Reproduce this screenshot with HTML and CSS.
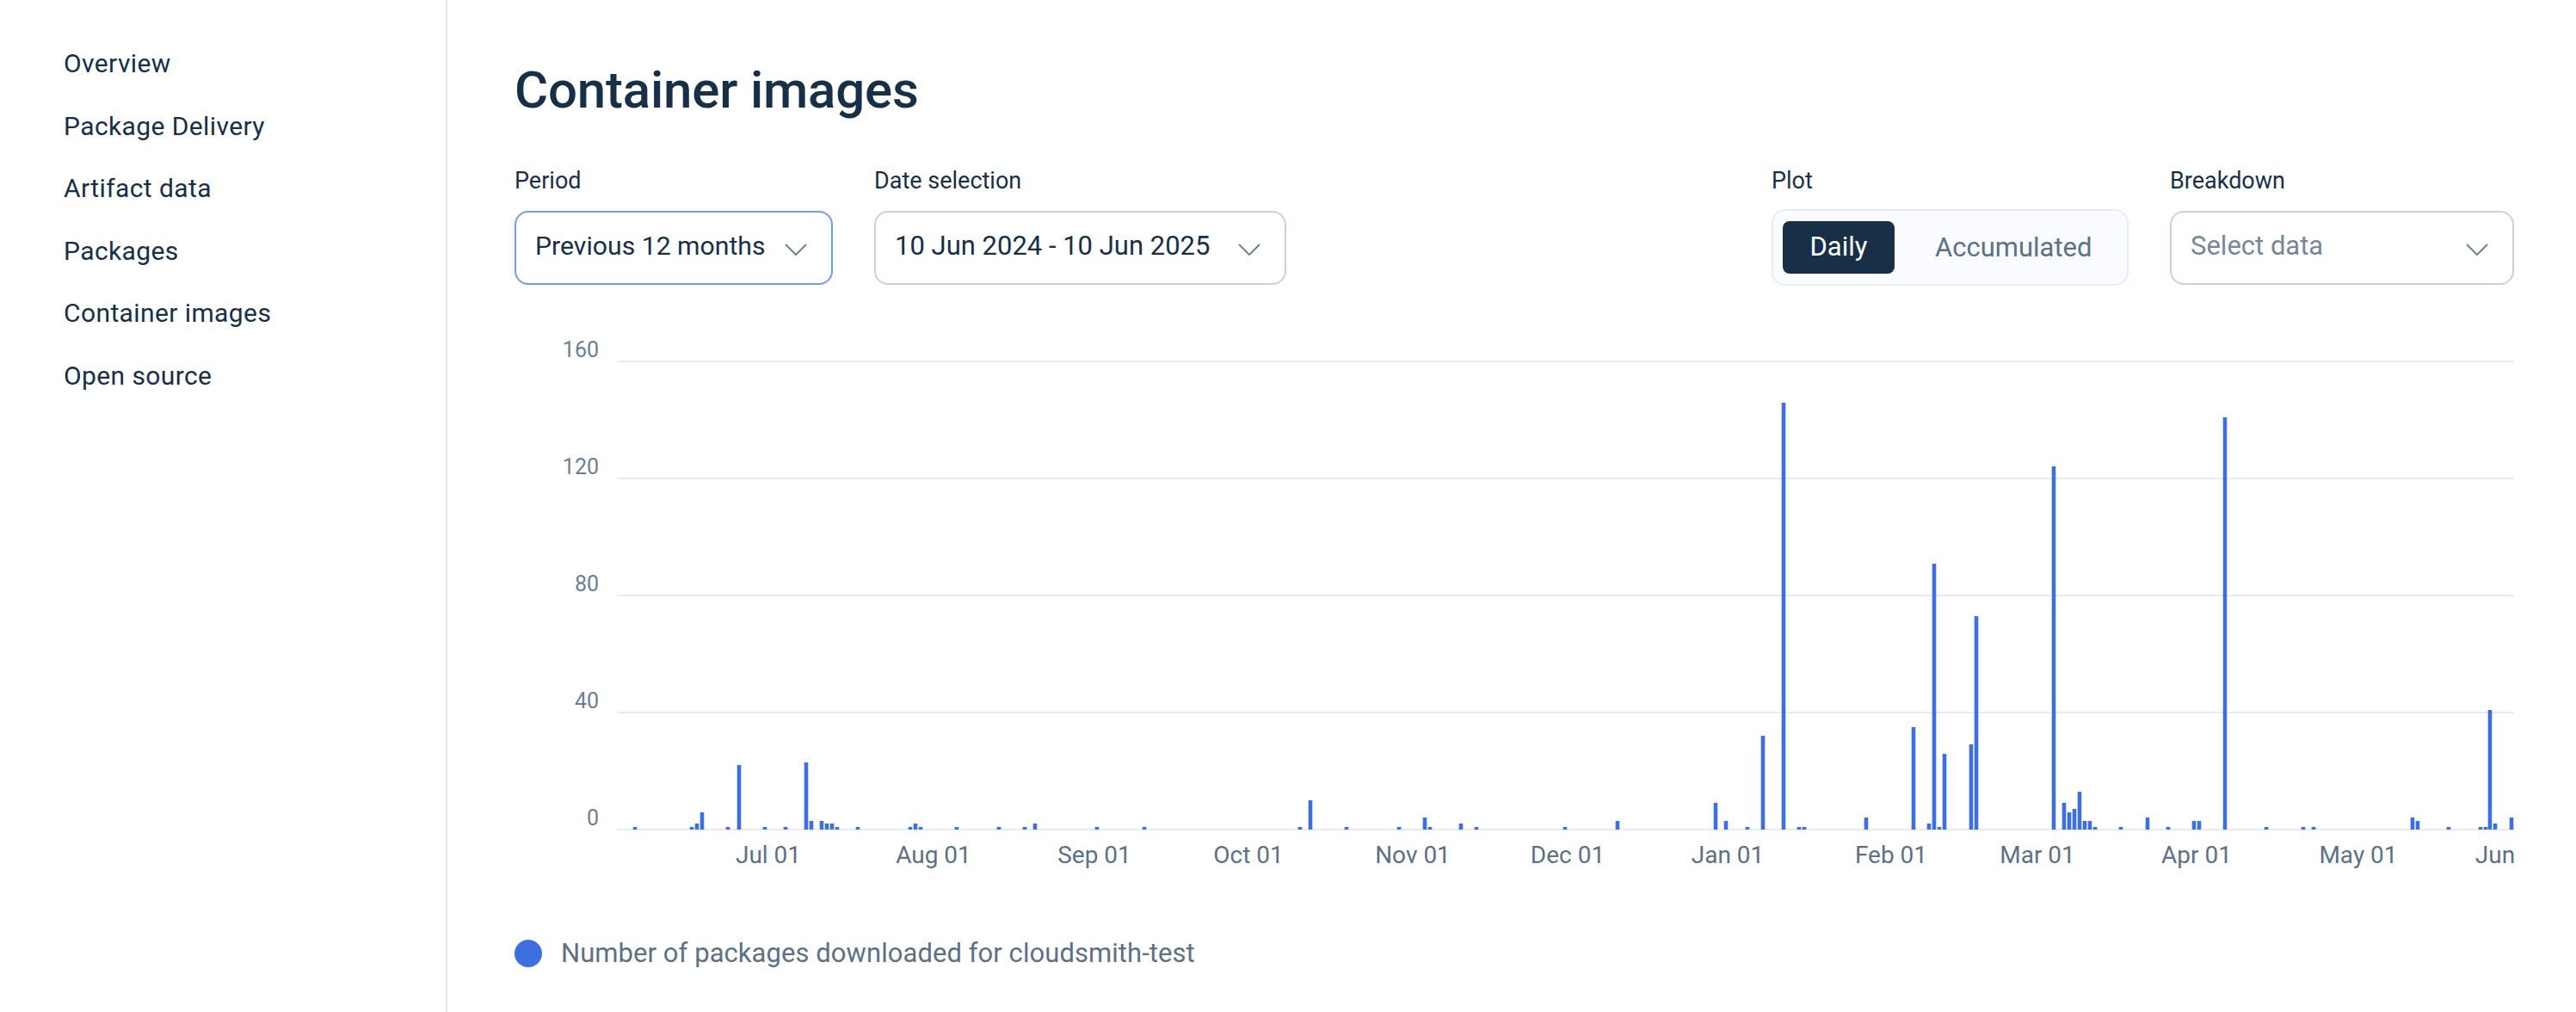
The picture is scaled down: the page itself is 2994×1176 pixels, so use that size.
FILE: index.html
```html
<!DOCTYPE html>
<html lang="en">
<head>
  <meta charset="UTF-8">
  <meta name="viewport" content="width=device-width, initial-scale=1.0">
  <title>Container images</title>
  <link rel="stylesheet" href="styles.css">
</head>
<body>
  <nav class="sidebar">
    <a href="#">Overview</a>
    <a href="#">Package Delivery</a>
    <a href="#">Artifact data</a>
    <a href="#">Packages</a>
    <a href="#">Container images</a>
    <a href="#">Open source</a>
  </nav>

  <main class="content">
    <h1>Container images</h1>

    <div class="controls">
      <div class="control-group">
        <div class="control">
          <label>Period</label>
          <div class="select select-period focused">
            <span>Previous 12 months</span>
            <svg class="chevron" viewBox="0 0 26 14"><polyline points="1,1 13,13 25,1"/></svg>
          </div>
        </div>
        <div class="control">
          <label>Date selection</label>
          <div class="select select-date">
            <span>10 Jun 2024 - 10 Jun 2025</span>
            <svg class="chevron" viewBox="0 0 26 14"><polyline points="1,1 13,13 25,1"/></svg>
          </div>
        </div>
      </div>
      <div class="control-group">
        <div class="control">
          <label>Plot</label>
          <div class="toggle">
            <span class="toggle-item active">Daily</span>
            <span class="toggle-item">Accumulated</span>
          </div>
        </div>
        <div class="control">
          <label>Breakdown</label>
          <div class="select select-breakdown placeholder">
            <span>Select data</span>
            <svg class="chevron" viewBox="0 0 26 14"><polyline points="1,1 13,13 25,1"/></svg>
          </div>
        </div>
      </div>
    </div>

    <!-- viewBox uses page coordinates, baseline y=963, 3.4px per download -->
    <svg class="chart" viewBox="598 380 2324 640">
      <g class="grid">
        <rect x="717" y="418" width="2205" height="2"/>
        <rect x="717" y="554" width="2205" height="2"/>
        <rect x="717" y="690" width="2205" height="2"/>
        <rect x="717" y="826" width="2205" height="2"/>
        <rect x="717" y="962" width="2205" height="2"/>
      </g>
      <g class="y-labels">
        <text x="696" y="414">160</text>
        <text x="696" y="550">120</text>
        <text x="696" y="686">80</text>
        <text x="696" y="822">40</text>
        <text x="696" y="958">0</text>
      </g>
      <g class="x-labels">
        <text x="893" y="1002">Jul 01</text>
        <text x="1085" y="1002">Aug 01</text>
        <text x="1272" y="1002">Sep 01</text>
        <text x="1451" y="1002">Oct 01</text>
        <text x="1642" y="1002">Nov 01</text>
        <text x="1822" y="1002">Dec 01</text>
        <text x="2008" y="1002">Jan 01</text>
        <text x="2198" y="1002">Feb 01</text>
        <text x="2368" y="1002">Mar 01</text>
        <text x="2553" y="1002">Apr 01</text>
        <text x="2741" y="1002">May 01</text>
        <text x="2900" y="1002">Jun</text>
      </g>
      <g class="bars">
        <rect x="736" y="960" width="4" height="3"/>
        <rect x="802" y="960" width="4" height="3"/>
        <rect x="808" y="956" width="4" height="7"/>
        <rect x="814" y="943" width="4" height="20"/>
        <rect x="844" y="960" width="4" height="3"/>
        <rect x="857" y="888" width="4" height="75"/>
        <rect x="887" y="960" width="4" height="3"/>
        <rect x="911" y="960" width="4" height="3"/>
        <rect x="935" y="885" width="4" height="78"/>
        <rect x="941" y="953" width="4" height="10"/>
        <rect x="953" y="953" width="4" height="10"/>
        <rect x="959" y="956" width="4" height="7"/>
        <rect x="965" y="956" width="4" height="7"/>
        <rect x="971" y="960" width="4" height="3"/>
        <rect x="995" y="960" width="4" height="3"/>
        <rect x="1056" y="960" width="4" height="3"/>
        <rect x="1062" y="956" width="4" height="7"/>
        <rect x="1068" y="960" width="4" height="3"/>
        <rect x="1110" y="960" width="4" height="3"/>
        <rect x="1159" y="960" width="4" height="3"/>
        <rect x="1189" y="960" width="4" height="3"/>
        <rect x="1201" y="956" width="4" height="7"/>
        <rect x="1273" y="960" width="4" height="3"/>
        <rect x="1328" y="960" width="4" height="3"/>
        <rect x="1509" y="960" width="4" height="3"/>
        <rect x="1521" y="929" width="4" height="34"/>
        <rect x="1563" y="960" width="4" height="3"/>
        <rect x="1624" y="960" width="4" height="3"/>
        <rect x="1654" y="949" width="4" height="14"/>
        <rect x="1660" y="960" width="4" height="3"/>
        <rect x="1696" y="956" width="4" height="7"/>
        <rect x="1714" y="960" width="4" height="3"/>
        <rect x="1817" y="960" width="4" height="3"/>
        <rect x="1878" y="953" width="4" height="10"/>
        <rect x="1992" y="932" width="4" height="31"/>
        <rect x="2004" y="953" width="4" height="10"/>
        <rect x="2029" y="960" width="4" height="3"/>
        <rect x="2047" y="854" width="4" height="109"/>
        <rect x="2071" y="467" width="4" height="496"/>
        <rect x="2089" y="960" width="4" height="3"/>
        <rect x="2095" y="960" width="4" height="3"/>
        <rect x="2167" y="949" width="4" height="14"/>
        <rect x="2222" y="844" width="4" height="119"/>
        <rect x="2240" y="956" width="4" height="7"/>
        <rect x="2246" y="654" width="4" height="309"/>
        <rect x="2252" y="960" width="4" height="3"/>
        <rect x="2258" y="875" width="4" height="88"/>
        <rect x="2289" y="864" width="4" height="99"/>
        <rect x="2295" y="715" width="4" height="248"/>
        <rect x="2385" y="541" width="4" height="422"/>
        <rect x="2397" y="932" width="4" height="31"/>
        <rect x="2403" y="943" width="4" height="20"/>
        <rect x="2409" y="939" width="4" height="24"/>
        <rect x="2415" y="919" width="4" height="44"/>
        <rect x="2421" y="953" width="4" height="10"/>
        <rect x="2427" y="953" width="4" height="10"/>
        <rect x="2433" y="960" width="4" height="3"/>
        <rect x="2463" y="960" width="4" height="3"/>
        <rect x="2494" y="949" width="4" height="14"/>
        <rect x="2518" y="960" width="4" height="3"/>
        <rect x="2548" y="953" width="4" height="10"/>
        <rect x="2554" y="953" width="4" height="10"/>
        <rect x="2584" y="484" width="4" height="479"/>
        <rect x="2632" y="960" width="4" height="3"/>
        <rect x="2675" y="960" width="4" height="3"/>
        <rect x="2687" y="960" width="4" height="3"/>
        <rect x="2802" y="949" width="4" height="14"/>
        <rect x="2808" y="953" width="4" height="10"/>
        <rect x="2844" y="960" width="4" height="3"/>
        <rect x="2881" y="960" width="4" height="3"/>
        <rect x="2887" y="960" width="4" height="3"/>
        <rect x="2892" y="824" width="4" height="139"/>
        <rect x="2898" y="956" width="4" height="7"/>
        <rect x="2917" y="949" width="4" height="14"/>
      </g>
    </svg>

    <div class="legend">
      <span class="legend-dot"></span>
      <span>Number of packages downloaded for cloudsmith-test</span>
    </div>
  </main>
</body>
</html>
```

FILE: styles.css
```css
* {
  box-sizing: border-box;
}

body {
  margin: 0;
  height: 1176px;
  overflow: hidden;
  display: flex;
  font-family: Roboto, "Noto Sans", sans-serif;
  color: #172f47;
  background-color: #fff;
}

.sidebar {
  width: 520px;
  flex-shrink: 0;
  height: 100%;
  padding: 38px 0 0 74px;
  border-right: 2px solid #e6ebf2;
  display: flex;
  flex-direction: column;
}

.sidebar a {
  height: 72.6px;
  line-height: 72.6px;
  font-size: 30px;
  color: #172f47;
  text-decoration: none;
  letter-spacing: 0.4px;
}

.content {
  width: 2324px;
  margin-left: 78px;
}

h1 {
  margin: 0;
  padding-top: 64px;
  height: 186px;
  line-height: 82px;
  font-size: 60px;
  font-weight: 500;
  letter-spacing: -0.2px;
}

.controls {
  display: flex;
  justify-content: space-between;
}

.control-group {
  display: flex;
  gap: 48px;
}

.control label {
  display: block;
  height: 59px;
  line-height: 48px;
  font-size: 27px;
}

.select {
  height: 86px;
  padding: 0 28px 0 22px;
  border: 2px solid #c5d2e0;
  border-radius: 16px;
  display: flex;
  justify-content: space-between;
  align-items: center;
  font-size: 31px;
  line-height: 80px;
}

.select span {
  margin-top: -4px;
}

.select.focused {
  border-color: #6f9bf0;
}

.select.placeholder {
  color: #74879a;
}

.select-period {
  width: 370px;
  font-size: 30.2px;
}

.select-date {
  width: 479px;
}

.select-breakdown {
  width: 400px;
}

.chevron {
  width: 26px;
  height: 14px;
  margin-top: 4px;
  flex-shrink: 0;
}

.chevron polyline {
  fill: none;
  stroke: #6e8296;
  stroke-width: 2;
}

.toggle {
  width: 415px;
  height: 89px;
  margin-top: -2px;
  padding: 12px 12px 12px 11px;
  border: 2px solid #e6ecf4;
  border-radius: 16px;
  background-color: #f9fbfe;
  display: flex;
  align-items: center;
  font-size: 31px;
}

.toggle-item {
  color: #5c7185;
}

.toggle-item.active {
  width: 130px;
  height: 61px;
  line-height: 60px;
  margin-right: 47px;
  text-align: center;
  border-radius: 8px;
  background-color: #172f47;
  color: #fff;
}

.chart {
  display: block;
  width: 2324px;
  height: 640px;
  margin-top: 49px;
}

.grid rect {
  fill: #e6ebf4;
}

.bars rect {
  fill: #3d6fe0;
  width: 4.6px;
  transform: translateX(-0.3px);
}

.y-labels text {
  font-size: 25px;
  fill: #6b7f93;
  text-anchor: end;
}

.x-labels text {
  font-size: 28px;
  fill: #5c7185;
  text-anchor: middle;
}

.legend {
  display: flex;
  align-items: center;
  gap: 22px;
  margin-top: 68px;
  font-size: 31px;
  letter-spacing: 0.06px;
  color: #5c7185;
}

.legend-dot {
  width: 32px;
  height: 32px;
  border-radius: 50%;
  background-color: #3d6fe0;
}
```
